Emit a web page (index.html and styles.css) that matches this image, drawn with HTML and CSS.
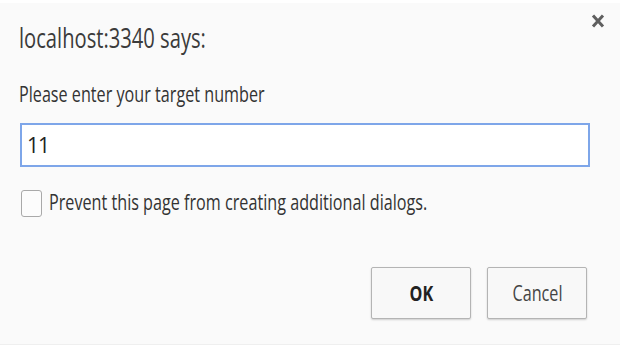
FILE: index.html
```html
<!DOCTYPE html>
<html lang="en">

<head>
    <meta charset="utf-8">
    <title>localhost:3340 says:</title>
    <link rel="stylesheet" href="styles.css">
</head>

<body>
    <!-- Prompt dialog; the text is narrowed to match the screenshot's proportions -->
    <div class="dialog">
        <div class="top">
            <h1 class="title"><span class="narrow wide-title">localhost:3340 says:</span></h1>
            <span class="close">
                <svg width="14" height="14" viewBox="0 0 14 14">
                    <path d="M2 1.5 L12 12.5 M12 1.5 L2 12.5" stroke="#5f5f5f" stroke-width="3" fill="none" />
                </svg>
            </span>
        </div>

        <p class="message"><span class="narrow">Please enter your target number</span></p>
        <input class="field" type="text" value="11" />

        <label class="suppress">
            <span class="box"></span>
            <span class="narrow">Prevent this page from creating additional dialogs.</span>
        </label>

        <div class="buttons">
            <button class="btn ok"><span class="narrow mid">OK</span></button>
            <button class="btn"><span class="narrow mid">Cancel</span></button>
        </div>
    </div>
</body>

</html>
```

FILE: styles.css
```css
html,
body {
    margin: 0;
    background: #ffffff;
}

.dialog {
    width: 620px;
    height: 342px;
    margin-top: 3px;
    padding-left: 20px;
    box-sizing: border-box;
    background: #fafafa;
    border-bottom: 1px solid #efefef;
    font-family: "Open Sans", "Noto Sans", sans-serif;
    color: #333;
    overflow: hidden;
}

/* screenshot text is squeezed sideways */
.narrow {
    display: inline-block;
    white-space: nowrap;
    transform: scaleX(0.77);
    transform-origin: 0 50%;
}

.narrow.wide-title {
    transform: scaleX(0.72);
}

.narrow.mid {
    transform-origin: 50% 50%;
}

.top {
    display: flex;
    justify-content: space-between;
    align-items: flex-start;
    padding-right: 15px;
}

.title {
    margin: 17px 0 0 -1px;
    font-size: 28px;
    line-height: 34px;
    font-weight: normal;
    color: #3b3b3b;
}

.close {
    margin-top: 11px;
}

.close svg {
    display: block;
}

.message {
    margin: 27px 0 0 -1px;
    font-size: 21px;
    line-height: 26px;
    color: #333;
}

.field {
    display: block;
    width: 570px;
    height: 44px;
    margin-top: 16px;
    padding: 0 0 0 5px;
    box-sizing: border-box;
    border: 2px solid #7ea6e9;
    background: #fff;
    font-family: "Open Sans", "Noto Sans", sans-serif;
    font-size: 21px;
    letter-spacing: -1px;
    color: #222;
    outline: none;
}

.suppress {
    display: flex;
    align-items: flex-start;
    gap: 7px;
    margin-top: 22px;
    font-size: 21px;
    line-height: 26px;
    color: #333;
}

.box {
    width: 21px;
    height: 27px;
    margin: 1px 0 0 1px;
    box-sizing: border-box;
    border: 1.5px solid #a9a9a9;
    border-radius: 3px;
    background: #fcfcfc;
}

.buttons {
    display: flex;
    justify-content: flex-end;
    gap: 16px;
    margin-top: 50px;
    padding-right: 33px;
}

.btn {
    width: 100px;
    height: 52px;
    padding: 0;
    border: 1.5px solid #b4b4b4;
    border-radius: 2px;
    background: #f8f8f8;
    box-shadow: 0 1px 2px rgba(0, 0, 0, 0.18);
    font-family: "Open Sans", "Noto Sans", sans-serif;
    font-size: 21px;
    color: #444;
}

.ok {
    font-weight: bold;
    color: #222;
}
```
